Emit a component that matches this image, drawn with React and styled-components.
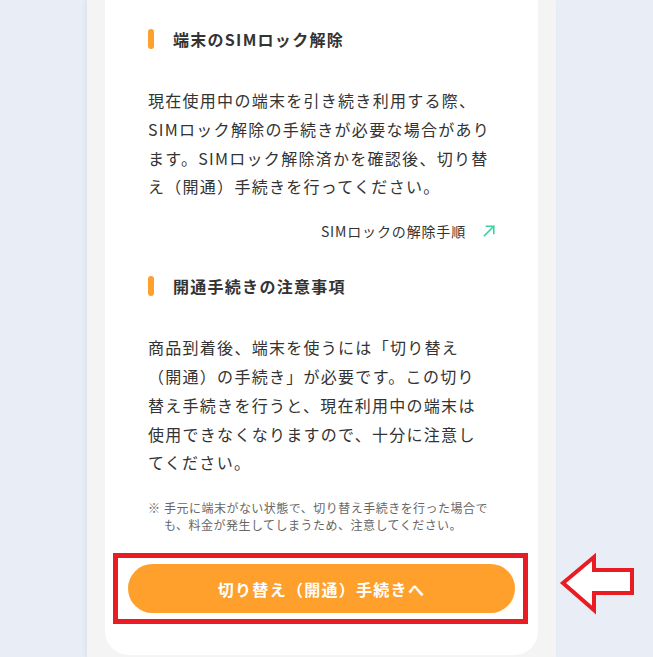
import React from "react";
import styled, { createGlobalStyle } from "styled-components";

const Global = createGlobalStyle`
  html, body { margin: 0; padding: 0; }
  body {
    background: #e9eef6;
    font-family: "Noto Sans CJK JP", "Noto Sans", sans-serif;
    color: #333;
  }
`;

const Page = styled.div`
  position: relative;
  width: 653px;
  height: 657px;
  overflow: hidden;
`;

const Panel = styled.div`
  margin-left: 87px;
  width: 469px;
  min-height: 657px;
  box-sizing: border-box;
  padding: 0 18px;
  background: #f4f4f4;
  box-shadow: -2px 0 4px rgba(60, 80, 110, 0.07);
`;

const Card = styled.div`
  background: #fff;
  border-radius: 0 0 24px 24px;
  padding: 29px 0 31px;
`;

const Section = styled.section`
  padding: 0 43px;
  display: flex;
  flex-direction: column;
`;

const Heading = styled.h2`
  margin: ${(p) => p.$mt || 0}px 0 0;
  display: flex;
  align-items: center;
  gap: 19px;
  height: 20px;
  font-size: 16px;
  line-height: 20px;
  font-weight: 700;
  letter-spacing: 0.08em;
  color: #333;
  &::before {
    content: "";
    width: 6px;
    height: 20px;
    border-radius: 3px;
    background: #ffa02c;
  }
`;

const Body = styled.p`
  margin: ${(p) => p.$mt || 0}px 0 0;
  font-size: 16px;
  line-height: 28.8px;
  letter-spacing: 0.08em;
  color: #333;
`;

const LinkRow = styled.a`
  margin-top: 20px;
  align-self: flex-end;
  display: flex;
  align-items: center;
  gap: 17px;
  font-size: 14px;
  line-height: 20px;
  letter-spacing: 0.06em;
  color: #333;
  text-decoration: none;
`;

const Note = styled.p`
  margin: 22px 0 0;
  padding-left: 16px;
  text-indent: -16px;
  font-size: 12px;
  line-height: 17px;
  letter-spacing: 0.04em;
  color: #666;
`;

const Mark = styled.span`
  display: inline-block;
  width: 16px;
  text-indent: 0;
  letter-spacing: 0;
`;

const Highlight = styled.div`
  margin: 20px 10px 0 8px;
  border: 5px solid #e91c24;
  padding: 6px 8px 6px 10px;
`;

const CTA = styled.button`
  display: block;
  width: 100%;
  height: 49px;
  border: none;
  border-radius: 25px;
  background: #ffa02c;
  color: #fff;
  font-family: "Noto Sans CJK JP", "Noto Sans", sans-serif;
  font-size: 16px;
  font-weight: 700;
  letter-spacing: 0.08em;
  cursor: pointer;
`;

const Pointer = styled.svg`
  position: absolute;
  left: 555px;
  top: 550px;
`;

const ExternalIcon = () => (
  <svg width="12" height="12" viewBox="0 0 12 12" fill="none" stroke="#3fd0a0" strokeWidth="1.6" strokeLinecap="square">
    <path d="M1.5 10.5 L10.2 1.8" />
    <path d="M3.5 1.2 H10.8 V8.5" />
  </svg>
);

export default function App() {
  return (
    <Page>
      <Global />
      <Panel>
        <Card>
          <Section>
            <Heading>端末のSIMロック解除</Heading>
            <Body $mt={37}>
              現在使用中の端末を引き続き利用する際、
              <br />
              SIMロック解除の手続きが必要な場合があり
              <br />
              ます。SIMロック解除済かを確認後、切り替
              <br />
              え（開通）手続きを行ってください。
            </Body>
            <LinkRow href="#">
              SIMロックの解除手順
              <ExternalIcon />
            </LinkRow>
            <Heading $mt={35}>開通手続きの注意事項</Heading>
            <Body $mt={37}>
              商品到着後、端末を使うには「切り替え
              <br />
              （開通）の手続き」が必要です。この切り
              <br />
              替え手続きを行うと、現在利用中の端末は
              <br />
              使用できなくなりますので、十分に注意し
              <br />
              てください。
            </Body>
            <Note>
              <Mark>※</Mark>手元に端末がない状態で、切り替え手続きを行った場合で
              <br />
              も、料金が発生してしまうため、注意してください。
            </Note>
          </Section>
          <Highlight>
            <CTA>切り替え（開通）手続きへ</CTA>
          </Highlight>
        </Card>
      </Panel>
      <Pointer width="85" height="68" viewBox="0 0 85 68">
        <polygon
          points="8,33 39,7 39,20 77,20 77,43 39,43 39,60"
          fill="#fff"
          stroke="#e91c24"
          strokeWidth="4"
          strokeLinejoin="miter"
        />
      </Pointer>
    </Page>
  );
}
